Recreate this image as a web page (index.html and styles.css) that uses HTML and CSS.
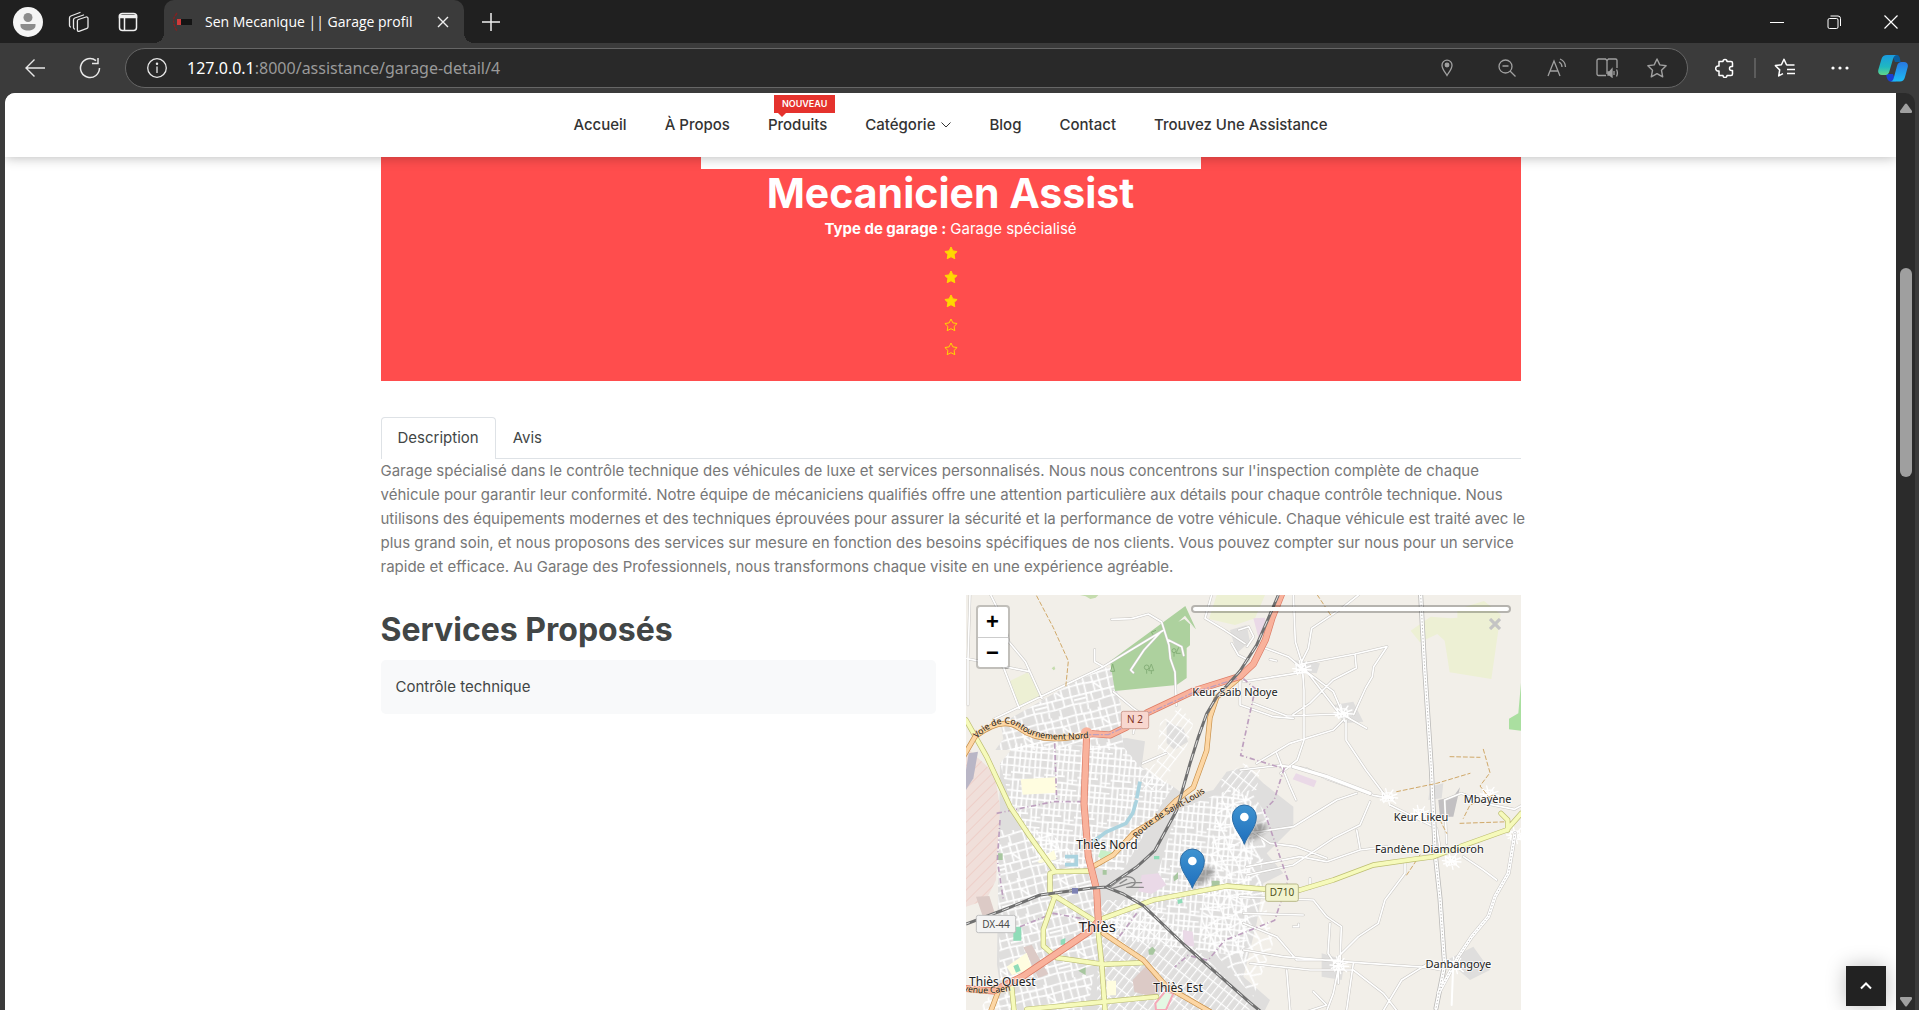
FILE: index.html
```html
<!DOCTYPE html>
<html lang="fr">
<head>
<meta charset="utf-8">
<title>Sen Mecanique || Garage profil</title>
<link rel="stylesheet" href="styles.css">
</head>
<body>
<div class="titlebar">
  <div class="strip-tools">
    <button class="strip-btn" aria-label="Profil"><svg width="30" height="30" viewBox="0 0 30 30"><circle cx="15" cy="15" r="15" fill="#f5f5f5"/><circle cx="15" cy="10.500" r="4.500" fill="#8c8c8c"/><path d="M7.500 17h15v1.500c0 3.500-3.500 5-7.500 5s-7.500-1.500-7.500-5z" fill="#8c8c8c"/></svg></button>
    <button class="strip-btn" aria-label="Espaces"><svg width="22" height="22" viewBox="0 0 22 22" fill="none" stroke="#e8e8e8" stroke-width="1.300" stroke-linejoin="round" stroke-linecap="round"><path d="M11.500 8.500l7.500-2.500a1.500 1.500 0 0 1 2 1.500v8.500a1.500 1.500 0 0 1-1 1.300l-8 3a1.200 1.200 0 0 1-1.600-1.200V10a1.600 1.600 0 0 1 1.100-1.500z"/><path d="M7.500 18a2 2 0 0 1-1-1.500V9a2 2 0 0 1 1.300-2L16.500 4M3.500 16a2 2 0 0 1-1-1.500V7a2 2 0 0 1 1.300-2L13 1.500"/></svg></button>
    <button class="strip-btn" aria-label="Onglets"><svg width="20" height="20" viewBox="0 0 20 20" fill="none" stroke="#f0f0f0" stroke-width="1.500"><rect x="1.500" y="1.500" width="17" height="17" rx="3"/><path d="M1.500 3.500h17v2h-17z" fill="#f0f0f0"/><path d="M6.500 6v12"/></svg></button>
  </div>
  <div class="tab">
    <svg width="20" height="20" viewBox="0 0 20 20"><path d="M4 1C1 5 0 8 .5 10S2 16 4 19" fill="none" stroke="#7d2323" stroke-width="1.500" stroke-dasharray="3 1"/><path d="M4 7h4v6H4z" fill="#d23a3a"/><path d="M8 7h11v6H8z" fill="#141414"/></svg>
    <span class="tab-title">Sen Mecanique || Garage profil</span>
    <button class="tab-close" aria-label="Fermer l'onglet"><svg width="12" height="12" viewBox="0 0 12 12" stroke="#f0f0f0" stroke-width="1.400"><path d="M1 1l10 10M11 1L1 11"/></svg></button>
  </div>
  <button class="new-tab" aria-label="Nouvel onglet"><svg width="18" height="18" viewBox="0 0 18 18" stroke="#f0f0f0" stroke-width="1.500"><path d="M9 0v18M0 9h18"/></svg></button>
  <div class="window-controls">
    <button aria-label="Réduire"><svg width="14" height="14" viewBox="0 0 14 14" stroke="#fff" stroke-width="1"><path d="M0 7.500h14"/></svg></button>
    <button aria-label="Restaurer"><svg width="14" height="14" viewBox="0 0 14 14" fill="none" stroke="#fff" stroke-width="1"><rect x="1" y="3.500" width="10" height="10" rx="1.500"/><path d="M3.500 1h7.500a2.500 2.500 0 0 1 2.500 2.500V11"/></svg></button>
    <button aria-label="Fermer"><svg width="14" height="14" viewBox="0 0 14 14" stroke="#fff" stroke-width="1.200"><path d="M.5.5l13 13M13.500.5l-13 13"/></svg></button>
  </div>
</div>

<div class="toolbar">
  <button class="tool" aria-label="Retour"><svg width="20" height="20" viewBox="0 0 20 20" fill="none" stroke="#e8e8e8" stroke-width="1.400"><path d="M20 10H1M9.500 1.500L1 10l8.500 8.500"/></svg></button>
  <button class="tool reload" aria-label="Actualiser"><svg width="22" height="22" viewBox="0 0 22 22" fill="none" stroke="#e8e8e8" stroke-width="1.500"><path d="M20.500 11A9.500 9.500 0 1 1 17 3.700M19 1v5.500h-6"/></svg></button>
  <div class="address">
    <svg width="20" height="20" viewBox="0 0 20 20" fill="none" stroke="#e8e8e8" stroke-width="1.300"><circle cx="10" cy="10" r="9.300"/><path d="M10 8.500V15"/><circle cx="10" cy="5.800" r=".6" fill="#e8e8e8"/></svg>
    <div class="url" role="textbox" aria-label="Adresse"><span class="host">127.0.0.1</span>:8000/assistance/garage-detail/4</div>
    <button class="pin" aria-label="Position"><svg width="12" height="18" viewBox="0 0 12 18" fill="none" stroke="#a0a0a0" stroke-width="1.300"><path d="M6 16.500C4 13 1 10 1 6.200a5 5 0 0 1 10 0C11 10 8 13 6 16.500z"/><circle cx="6" cy="6" r="1.800" fill="#a0a0a0"/></svg></button>
    <button aria-label="Zoom"><svg width="18" height="18" viewBox="0 0 18 18" fill="none" stroke="#a0a0a0" stroke-width="1.300"><circle cx="7.500" cy="7.500" r="6.500"/><path d="M12 12l5.500 5.500M4.500 7h6"/></svg></button>
    <button aria-label="Lecture à voix haute"><svg width="20" height="20" viewBox="0 0 20 20" fill="none" stroke="#a0a0a0" stroke-width="1.300"><path d="M1 18L7 3l6 15M3 13h8M12 4c2 1 3 3 3 5M13 1c3.500 1.500 5.500 4 5.500 8"/></svg></button>
    <button aria-label="Lecteur immersif"><svg width="22" height="20" viewBox="0 0 22 20" fill="none" stroke="#a0a0a0" stroke-width="1.300"><path d="M10 17.500H2.500A1.500 1.500 0 0 1 1 16V2.500A1.500 1.500 0 0 1 2.500 1h7l1.500 1.500L12.500 1h7A1.500 1.500 0 0 1 21 2.500V10M11 2.500V16"/><path d="M12 14h1.500l2.500-3v8l-2.500-2H12z" fill="#a0a0a0"/><path d="M18 13v4M20.500 11.500c1 2 1 5 0 7"/></svg></button>
    <button aria-label="Favori"><svg width="20" height="20" viewBox="0 0 20 20" fill="none" stroke="#a0a0a0" stroke-width="1.400" stroke-linejoin="round"><path d="M10 1l2.800 5.900 6.300.9-4.600 4.500 1.200 6.500L10 15.700l-5.700 3.100 1.200-6.500L.9 7.800l6.300-.9z"/></svg></button>
  </div>
  <button class="tool puzzle" aria-label="Extensions"><svg width="20" height="20" viewBox="0 0 20 20" fill="none" stroke="#fff" stroke-width="1.500" stroke-linejoin="round"><path d="M4 3.500h4a2 2 0 1 1 4 0h4a1.500 1.500 0 0 1 1.500 1.500v3.500h-1a2 2 0 1 0 0 4h1V16a1.500 1.500 0 0 1-1.500 1.500h-4a2 2 0 1 1-4 0H4V13a2.600 2.600 0 1 1 0-5z"/></svg></button>
  <span class="divider"></span>
  <button class="tool" aria-label="Favoris"><svg width="22" height="20" viewBox="0 0 22 20" fill="none" stroke="#fff" stroke-width="1.500" stroke-linejoin="round"><path d="M20.500 7h-7l-1-.3L10 1.200 7.400 6.700l-6 .9 4.300 4.300-1 6 4.300-2.300M13 11.500h8M13 15.500h8"/></svg></button>
  <button class="tool more" aria-label="Plus"><svg width="18" height="4" viewBox="0 0 18 4" fill="#fff"><circle cx="2" cy="2" r="1.600"/><circle cx="9" cy="2" r="1.600"/><circle cx="16" cy="2" r="1.600"/></svg></button>
  <button class="tool copilot" aria-label="Copilot"><svg width="30" height="27" viewBox="0 0 30 27"><defs><linearGradient id="cp1" x1="0" y1="0" x2="0" y2="1"><stop offset="0" stop-color="#1a9be0"/><stop offset=".6" stop-color="#1fb8c0"/><stop offset="1" stop-color="#62d488"/></linearGradient><linearGradient id="cp2" x1="0" y1="0" x2="0" y2="1"><stop offset="0" stop-color="#2878e0"/><stop offset="1" stop-color="#1dbcf5"/></linearGradient></defs><path d="M14 0h5c2 0 3 2 3.500 7H17z" fill="#0a5c9c"/><path d="M8 19h7l3 7.500h-5c-3 0-4-2-5-7.500z" fill="#1a3fd0"/><path d="M9 0h10c-2 0-3 1-4 4l-3.500 12c-.7 2.500-2 4-4 4H4c-3 0-4.500-2-3.600-5.500L3.500 4C4.300 1.500 6 0 9 0z" fill="url(#cp1)"/><path d="M22 26.500H12c2 0 3-1 3.600-3L19 11c.8-3 2.500-4 4.500-4H26c3 0 4.500 2 3.600 5.500L27 22c-.8 3-2.500 4.500-5 4.500z" fill="url(#cp2)"/></svg></button>
</div>

<div class="frame">
  <div class="viewport">
    <header class="site-header">
      <nav class="menu">
        <a href="#">Accueil</a>
        <a href="#">À Propos</a>
        <a href="#" class="has-badge">Produits<span class="badge">NOUVEAU</span></a>
        <a href="#">Catégorie<svg width="10" height="6" viewBox="0 0 10 6" fill="none" stroke="#333" stroke-width="1"><path d="M.5.5L5 5 9.500.5"/></svg></a>
        <a href="#">Blog</a>
        <a href="#">Contact</a>
        <a href="#">Trouvez Une Assistance</a>
      </nav>
    </header>

    <main class="container">
      <section class="hero">
        <div class="photo"></div>
        <h1>Mecanicien Assist</h1>
        <p><strong>Type de garage :</strong> Garage spécialisé</p>
        <ul class="stars">
          <li><svg viewBox="0 0 14 14"><use href="#star"/></svg></li>
          <li><svg viewBox="0 0 14 14"><use href="#star"/></svg></li>
          <li><svg viewBox="0 0 14 14"><use href="#star"/></svg></li>
          <li class="empty"><svg viewBox="0 0 14 14"><use href="#star"/></svg></li>
          <li class="empty"><svg viewBox="0 0 14 14"><use href="#star"/></svg></li>
        </ul>
        <svg class="defs" width="0" height="0"><path id="star" d="M7 1l1.900 3.900 4.200.6-3.050 3 .75 4.200L7 10.700l-3.800 2 .75-4.200-3.050-3 4.200-.6z"/></svg>
      </section>

      <div class="tabs" role="tablist">
        <button class="active" role="tab" aria-selected="true">Description</button>
        <button role="tab" aria-selected="false">Avis</button>
      </div>
      <p class="description">Garage spécialisé dans le contrôle technique des véhicules de luxe et services personnalisés. Nous nous concentrons sur l'inspection complète de chaque<br>véhicule pour garantir leur conformité. Notre équipe de mécaniciens qualifiés offre une attention particulière aux détails pour chaque contrôle technique. Nous<br>utilisons des équipements modernes et des techniques éprouvées pour assurer la sécurité et la performance de votre véhicule. Chaque véhicule est traité avec le<br>plus grand soin, et nous proposons des services sur mesure en fonction des besoins spécifiques de nos clients. Vous pouvez compter sur nous pour un service<br>rapide et efficace. Au Garage des Professionnels, nous transformons chaque visite en une expérience agréable.</p>

      <div class="columns">
        <section class="services">
          <h2>Services Proposés</h2>
          <ul><li>Contrôle technique</li></ul>
        </section>

        <section class="map" aria-label="Carte">
          <svg class="tiles" viewBox="18 15 1665 1500" preserveAspectRatio="xMidYMin slice">
            <defs>
              <pattern id="gridA" width="120" height="110" patternUnits="userSpaceOnUse" patternTransform="rotate(-14)"><path d="M0 8l60 3 60-3M0 32l40-2 44 4 36-2M0 62h50l70 0M0 86l70 4 50-4M8 0l-3 55 3 55M30 8l2 54M26 86v24M26 0v8M52 10v52l-4 48M52 0v10M78 0l2 60M80 34l24 28M98 8l2 54 0 28M66 62l2 28M84 90v20M84 0v8M12 74h36" stroke="#fff" stroke-width="5" fill="none"/></pattern>
              <pattern id="gridB" width="100" height="120" patternUnits="userSpaceOnUse" patternTransform="rotate(5)"><path d="M0 6h100M0 30l40 2 60-2M0 50h62M0 72l50-3 50 3M30 90h70M0 104l60 2 40-2M8 0v120M24 6v44M24 72v48M24 0v6M40 0l-2 50 2 70M54 6v44M56 70v50M56 0v6M70 0l2 72-2 48M86 6v66M86 90v30M86 0v6M72 60h28" stroke="#fff" stroke-width="5" fill="none"/></pattern>
              <pattern id="gridC" width="20" height="38" patternUnits="userSpaceOnUse" patternTransform="rotate(38)"><path d="M0 1h20M1 0v38" stroke="#fff" stroke-width="5" fill="none"/></pattern>
              <pattern id="gridD" width="110" height="100" patternUnits="userSpaceOnUse" patternTransform="rotate(66)"><path d="M0 6l50 8 60-8M0 40l60-6 50 6M0 74l40 4 70-4M8 0l8 50-8 50M40 10l6 64-6 26M40 0v10M76 0l-10 40 20 34-10 26M16 50l30 24M66 40l44-34M100 40l-8 34" stroke="#fff" stroke-width="5" fill="none"/></pattern>
              <pattern id="hatch" width="24" height="24" patternUnits="userSpaceOnUse" patternTransform="rotate(45)"><path d="M0 0v24" stroke="#ecc0b8" stroke-width="3"/></pattern>
              <path id="northRoad" d="M50 446C90 405 140 385 180 416S280 455 385 444L440 436"/>
              <path id="louisRoad" d="M530 747C570 700 610 680 700 630S742 560 752 530"/>
              <path id="caen" d="M-6 1198Q70 1222 180 1196"/>
              <path id="lanes" d="M30 15l-6 190 0 140M18 205l190 40M92 15l40 80 14 60 50 60 50 110M118 200l60 155M100 388l330-158 178-108M430 230l-26-15v-36M455 88l60-2 50-14 40 24 22 70 4 40 14 40 4 100M600 128l-48 52-40 60 8 8M625 150l40 20 6 26M460 305l60 50 40 28M520 430l8-40M755 15l-20 70 60 36 60 40M836 120l30-10 15 30-20 30M815 160l20 35 30 15M548 520l70-30M1000 15l6 140 20 65 6 80 0 150 -20 60-50 40M1195 15l-50 40-90 60-10 60-20 40M905 170l80 30 60 50 100 130M1025 222l160-30 96-22-40 60-4 30-20 34-36 80M1185 192l4 42-70 36-70 70-50 34M840 265l0 80 100 35 60 5M850 275l190-30 80 60 30 70 70 40M880 340l100 38 160-6M930 208l20 5M890 520l100-60 130-40 30-30M1158 390l0 60 60 90 60 80M950 490l40 100 18 40M840 540l120-14 80 10 60 30 140 50 60 10M1460 760l-6-130 50-20 70 30 90 18 18-10M1230 635l-30 70-80 40-120 80-140 30M860 730l140-20 130-80 60-20M1190 720l10 55M860 830l160-30 80 15 100-35 80-10M870 720l60 40 80 10 90 35 M1335 810l0 40-60 80-20 70-60 40-60 60v80M840 920l220 10 40 50 44 30-4 110M850 970l180 5M1050 865v30M850 1000l100 40 60 70 90 0 30 0M850 1080l120 20 180 15 260 18 40 8M1140 1110l-20 100-30 80M1180 1120l-20 140M870 1120l180 20 130 0 90 70 70 90M980 1140l10 120M1060 1205l40 40-60 20M1405 1120l-80 50-60 100M1510 800l60 40 40 30M1440 775l-10-60-60-30-80-40M1000 1010h16v-8M1110 1000l-6 90 20 30"/>
              <path id="village" d="M-24 10L26-8M-20-14L22 20M-8-24L4 26M14-20L-14 18M-28 0l56 4M-16 14l30-2-4-24-28 2z" fill="none" stroke="#fff" stroke-width="4"/>
              <path id="highway" d="M1382 15l12 220 20 300 12 260 14 130 14 200-26 130"/>
              <path id="yellow" d="M18 390l62 110 70 150 60 90 75 105 105-2M285 845l-15 5 0 60 15 8-35 100 0 50 40 35 140 20 120-5M285 918l120 75M430 985l150-55 220-42 120 10 100 2 100-30 120-45 120-17 60-8 80-30 140-50 44-50M1643 720v-30l-20-20M415 1030l10 90 10 140M155 1190l8 80M200 1258l390-38"/>
              <path id="orange" d="M10 500l35-60C90 405 140 385 180 416S280 455 370 436M840 262l-70 60-20 60-10 100-40 110-50 38-50 50-80 50-60 65-60 34M430 1030l120 80 70 80 130 75M120 1190l-30 80"/>
              <path id="trunk" d="M10 1195l90 8 90-45 200-135 25-30-5-93-25-100-13-160 8-210 70 5 50-24 60-42 140-66 140-44 40-37 36-72 20-66 34-85"/>
              <path id="rail" d="M955 15l-30 70-35 80-50 78-70 78-30 50-25 70-25 80-40 140-65 120-55 50-90 60-50 4-150 20-110 45-112 42M440 892l50 20 60 35 120 115 200 176 80 66"/>
            </defs>
            <path d="M18 15h1665v1500H18z" fill="#f2efe9"/>
            <!-- fields -->
            <path fill="#edf0d4" d="M145 275l58-28 44 74-68 34zM770 15h100l45 0-30 70-60 20-78-18zM1352 122l60-42 60 5 20-2v-25l80-25 50 40-28 194-125-20-15-95-22-20-52 25z"/>
            <path d="M360 15h55l-8 8-16 4-14-8zM275 235l8-6 3 8-5 4z" fill="#c5dcae"/>
            <path d="M1683 278l-8 92-28 16v32l36 4z" fill="#aadfa0"/>
            <path d="M1480 620l-45 10 5 50h40l20-88z" fill="#c2c0c2"/>
            <!-- built-up areas -->
            <g fill="#dfdedd">
              <path d="M122 402l300-172 30 4 30 106 8 130-20 10-364 0 24-34z"/>
              <path d="M120 520l50-60 330-16 55 10-10 76 40 30 55 30 40 30 80-20 40-55 60-15 50 50 90 70 0 60-80 80 50 60-60 30-20 120-40 160 80 70-40 80-30 140-40 245H60l0-300 60-40-10-180z"/>
              <path d="M810 120l50-15 10 50-40 35zM1000 210l80 10-10 30-60-5zM1120 345l60-10 30 60-60 5zM1410 590l40-10-5 45-40 5zM1085 1090l70 20-10 60-60-10zM1460 1110l80-40 50 70-60 30zM620 395l50 20 14 40-40 24-24-20z"/>
            </g>
            <path d="M122 402l300-172 30 4 30 106 8 130-20 10-364 0 24-34z" fill="url(#gridA)"/>
            <path d="M120 520l50-60 320 10 50 60 100 60-40 60-110 190-110 0-150-30-80-180z" fill="url(#gridB)"/>
            <path d="M110 720h150l140 120 30 150-40 230-60 295H60v-260l60-80z" fill="url(#gridA)"/>
            <path d="M410 1000l180-140 60-200 180-70 60 60-20 290-20 160-430-60z" fill="url(#gridB)"/>
            <path d="M420 930l150 0 300 310-20 275H400z" fill="url(#gridC)"/>
            <path d="M770 640l100-40 60 90-30 170 40 200-60 160-160-180z" fill="url(#gridD)"/>
            <path d="M600 400l60-50 40 50-20 70-40 50-30 80-60 0-10-60 50-20z" fill="url(#gridC)"/>
            <path d="M780 570l70-50 50 20-10 60-100 20z" fill="url(#gridC)"/>
            <!-- industry, gardens and public grounds -->
            <path d="M18 470l85 80 17 100-12 220-30 60-60 20z" fill="#f0dfda"/><path d="M18 470l85 80 17 100-12 220-30 60-60 20z" fill="url(#hatch)"/>
            <path d="M18 1010l80 30 20 130-100 20z" fill="#f2efe9"/>
            <path d="M26 490l28-5-14 80-22 35v-60z" fill="#b9b6c6"/>
            <path d="M48 920l40-2 16 50-36 10zM190 1072l25-8 50 88-30 12zM518 1170l40-42 55 58-30 36-60-16z" fill="#dccac6"/>
            <path d="M545 855l50-5 24 34-44 28-40-8zM668 1020l30 5 5 45-30-5zM880 85l35-2 5 40-25 18zM1008 550l62 22-8 20-64-24z" fill="#ead9e7"/>
            <g fill="#fffde0"><path d="M182 568l106-6 2 46-102 6zM232 815l50-35 8 28-50 12zM140 1130l60-42 16 48-60 20zM440 1172h28v44h-28z"/></g>
            <g fill="#8fdcb8"><path d="M160 1010h24v42h-24zM160 1128l14-6 8 20-14 6zM302 1050l14-6v20h-14zM582 798h16v10h-16zM652 930l14-4 2 12-14 4z"/></g>
            <g fill="#a8c7a0"><path d="M565 1080l12-10 10 10-8 14h-12zM355 1142l22-10v24zM114 790h14v20h-14zM428 840h12v14h-12zM755 872h24v22h-24zM640 860l14-14v20l-12 8z"/></g>
            <path d="M586 1240l30-36 24 6-22 50h-30z" fill="#e4f8e4" stroke="#f5a8b8" stroke-width="6"/>
            <path d="M450 214l226-166 32 70-18-16 0 64-10 8 0 90-30 21-185 18z" fill="#add19e"/>
            <path d="M655 95l20-18 33 42-35-32z" fill="#f2efe9"/>
            <g fill="none" stroke="#86b079" stroke-width="3"><circle cx="560" cy="232" r="7"/><path d="M560 239v12M574 222l-8 20h15zM574 242v10"/><circle cx="642" cy="182" r="6"/><path d="M642 188v12M656 172l-8 18h14M458 222l-6 22h12zM580 135l-6-8 14-6"/></g>
            <path d="M530 630l-12 40-20 30-60 26-40 30M315 800h34v24h-34M540 575l-10 50" fill="none" stroke="#aad3df" stroke-width="11"/>
            <path d="M422 780l50 10-40 20-18-10z" fill="#c8efc8"/>
            <g fill="none" stroke-linejoin="round" stroke-linecap="round">
              <!-- country tracks and local roads -->
              <use href="#lanes" stroke="#c9c7c4" stroke-width="8"/>
              <use href="#lanes" stroke="#fff" stroke-width="5"/>
              <use href="#village" x="1026" y="236"/><use href="#village" x="1150" y="368"/><use href="#village" x="1285" y="620"/><use href="#village" x="1380" y="670"/><use href="#village" x="1138" y="1125"/><use href="#village" x="1488" y="1125"/><use href="#village" x="1668" y="735"/><use href="#village" x="1588" y="612"/><use href="#village" x="1475" y="812"/>
              <use href="#highway" stroke="#bdbcba" stroke-width="15"/>
              <path d="M1000 530l100 30 130 50M1665 730l-20 120-40 70-20 60-50 60-40 60-60 110" stroke="#c9c7c4" stroke-width="13"/>
              <g stroke="#fff" stroke-width="10"><use href="#highway"/><path d="M1000 530l100 30 130 50M1665 730l-20 120-40 70-20 60-50 60-40 60-60 110"/></g>
              <path d="M1382 15l12 220 20 300 12 260 14 130 14 200-26 130M1665 730l-20 120-40 70-20 60-50 60-40 60-60 110" stroke="#c4c3c1" stroke-width="3" stroke-dasharray="2 8"/>
              <path d="M1475 1245l5-130" stroke="#fff" stroke-width="6"/>
              <path d="M230 18l50 95 45 100-8 80M1072 15l40 60M1470 500l90 2M1570 478l20 70-30 40 40 50M1310 605l120-25 100-30M1340 855l40-60M1500 700l150-5M1600 615l-70 30-20 40M1440 690l20 40" stroke="#d0a868" stroke-width="3" stroke-dasharray="12 8"/>
              <path d="M284 460l6 170M120 690l-8 120 18 120M110 670l170-35 90 0M850 266l36 30-44 200 130 40-30 95-30 30 72 210-40 120-150 60-50 60-60-15-40 35M180 1010l100-40 110 20M430 1100l8 160M530 970l-60 80" stroke="#bd9fbe" stroke-width="5" stroke-dasharray="16 8 3 8" stroke-linecap="butt"/>
              <!-- main roads -->
              <use href="#yellow" stroke="#bdbe72" stroke-width="16"/><use href="#yellow" stroke="#f6fabb" stroke-width="12"/>
              <use href="#orange" stroke="#c8904a" stroke-width="16"/><use href="#orange" stroke="#fcd6a4" stroke-width="12"/>
              <use href="#trunk" stroke="#dc7c66" stroke-width="21"/><use href="#trunk" stroke="#f9b29c" stroke-width="17"/>
              <circle cx="380" cy="430" r="18" fill="#f9b29c"/>
              <path d="M365 434h80l60-28 55-34 140-64 130-42" stroke="#bd9fbe" stroke-width="4" stroke-dasharray="16 8 3 8"/>
              <!-- railway -->
              <use href="#rail" stroke="#707070" stroke-width="9" stroke-linecap="butt"/>
              <use href="#rail" stroke="#e4e4e4" stroke-width="3" stroke-linecap="butt" stroke-dasharray="22 20"/>
              <path stroke="#8c8c8c" stroke-width="4" d="M450 892l40-30a24 16 0 1 1 10 30h50M455 896l60-18h30M480 880l20-12"/>
              <path d="M336 894h18v17h-18z" fill="#7e82b4"/>
            </g>
            <!-- road shields -->
            <g stroke-width="3">
              <rect x="484" y="364" width="82" height="52" rx="6" fill="#f8d7cf" stroke="#cf9f93"/>
              <rect x="917" y="882" width="98" height="52" rx="6" fill="#f2f4cf" stroke="#b8b989"/>
              <rect x="49" y="976" width="118" height="52" rx="6" fill="#f4f4f4" stroke="#c0c0c0"/>
            </g>
            <g class="shields"><text x="525" y="400" class="red">N 2</text><text x="966" y="918" class="olive">D710</text><text x="108" y="1013">DX-44</text></g>
            <g class="places">
              <text x="825" y="318">Keur Saib Ndoye</text><text class="district" x="441" y="777">Thiès Nord</text><text class="town" x="412" y="1026">Thiès</text>
              <text class="district" x="127" y="1187">Thiès Ouest</text><text class="district" x="654" y="1205">Thiès Est</text><text x="1583" y="639">Mbayène</text><text x="1383" y="692">Keur Likeu</text>
              <text x="1408" y="790">Fandène Diamdioroh</text><text x="1495" y="1134">Danbangoye</text>
            </g>
            <g class="streets"><text><textPath href="#northRoad">Voie de Contournement Nord</textPath></text><text><textPath href="#louisRoad">Route de Saint-Louis</textPath></text><text><textPath href="#caen">Avenue Caen</textPath></text></g>
            <!-- markers -->
            <defs>
              <linearGradient id="pinFill" x1="0" y1="0" x2="0" y2="1"><stop offset="0" stop-color="#3f93d0"/><stop offset="1" stop-color="#1f6fbd"/></linearGradient>
              <filter id="soft" x="-30%" y="-30%" width="160%" height="160%"><feGaussianBlur stdDeviation="6"/></filter>
              <g id="marker"><path d="M0 0L18-46Q36-74 58-62T42-22z" fill="#000" opacity=".3" filter="url(#soft)"/><path d="M0 0C-8-26-36-50-36-82a36 36 0 0 1 72 0C36-50 8-26 0 0z" fill="url(#pinFill)" stroke="#2e6ea6" stroke-width="3"/><circle cy="-82" r="13" fill="#fff"/></g>
            </defs>
            <use href="#marker" x="853" y="763"/><use href="#marker" x="697" y="895"/>
          </svg>
          <div class="zoom-control"><button aria-label="Zoom avant">+</button><button aria-label="Zoom arrière">−</button></div>
          <div class="route-panel"></div>
          <button class="route-close" aria-label="Fermer l'itinéraire"><svg width="12" height="12" viewBox="0 0 12 12" stroke="#c4c4c4" stroke-width="3.200"><path d="M1 1l10 10M11 1L1 11"/></svg></button>
        </section>
      </div>
    </main>
    <button class="to-top" aria-label="Haut de page"><svg width="12" height="8" viewBox="0 0 12 8" fill="none" stroke="#fff" stroke-width="2"><path d="M1 6.500l5-5 5 5"/></svg></button>
  </div>
  <div class="scrollbar">
    <svg width="14" height="10" viewBox="0 0 14 10"><path d="M6 1q1-1 2 0l5 7q.5 2-1 2H2q-1.500 0-1-2z" fill="#a0a0a0"/></svg>
    <div class="track"><span class="before"></span><span class="thumb"></span><span class="after"></span></div>
    <svg width="14" height="10" viewBox="0 0 14 10"><path d="M6 9q1 1 2 0l5-7q.5-2-1-2H2Q.5 0 1 2z" fill="#a0a0a0"/></svg>
  </div>
</div>
</body>
</html>
```

FILE: styles.css
```css
* { box-sizing: border-box; }
body {
  margin: 0;
  height: 100vh;
  display: flex;
  flex-direction: column;
  overflow: hidden;
  background: #3b3b3b;
  color: #424646;
  font: 15px/24px Inter, "Open Sans", sans-serif;
}
button { border: 0; padding: 0; background: none; color: inherit; font: inherit; display: flex; align-items: center; justify-content: center; }
svg { display: block; flex: none; }
h1, h2, p, ul { margin: 0; padding: 0; list-style: none; }
a { color: inherit; text-decoration: none; }

/* browser title bar */
.titlebar { flex: none; height: 43px; display: flex; background: #202020; }
.strip-tools { display: flex; align-items: center; gap: 20px; padding: 0 21px 0 13px; }
.strip-btn { width: 30px; height: 30px; }
.tab {
  position: relative;
  width: 300px;
  padding: 0 14px 0 9px;
  display: flex;
  align-items: center;
  background: #3b3b3b;
  border-radius: 10px 10px 0 0;
  color: #fff;
  font: 14px/20px "Open Sans", sans-serif;
}
.tab::before, .tab::after { content: ""; position: absolute; bottom: 0; width: 10px; height: 10px; }
.tab::before { left: -10px; background: radial-gradient(circle at 0 0, #202020 10px, #3b3b3b 10px); }
.tab::after { right: -10px; background: radial-gradient(circle at 100% 0, #202020 10px, #3b3b3b 10px); }
.tab-title { flex: 1; padding-left: 12px; white-space: nowrap; }
.tab-close { width: 14px; height: 20px; }
.new-tab { width: 54px; }
.window-controls { margin-left: auto; display: flex; }
.window-controls button { width: 57px; }

/* browser toolbar */
.toolbar { flex: none; height: 50px; display: flex; align-items: center; padding: 0 6px 0 15px; }
.tool { flex: none; width: 40px; height: 40px; }
.reload { margin: 0 15px; }
.address {
  flex: 1;
  height: 40px;
  padding: 0 14px 0 21px;
  display: flex;
  align-items: center;
  gap: 18px;
  border: 1px solid #666;
  border-radius: 20px;
  background: #292929;
}
.address button { width: 32px; height: 32px; }
.address .pin { margin-right: 10px; }
.url { flex: 1; padding-left: 2px; color: #9a9a9a; font: 16px/24px "Noto Sans", sans-serif; white-space: nowrap; }
.host { color: #fff; }
.puzzle { margin: 0 9px 0 17px; }
.divider { width: 2px; height: 20px; margin-right: 9px; background: #5c5c5c; }
.more { margin: 0 13px 0 15px; }

/* page frame */
.frame { flex: 1; min-height: 0; display: flex; padding: 0 4px 0 5px; }
.viewport { flex: 1; position: relative; overflow: hidden; background: #fff; border-radius: 10px 0 0 0; }
.scrollbar { width: 19px; padding: 10px 0 3px; display: flex; flex-direction: column; align-items: center; background: #2b2b2b; border-radius: 0 10px 0 0; }
.track { flex: 1; display: flex; flex-direction: column; }
.before { flex: 155; }
.thumb { flex: 209; width: 12px; border-radius: 6px; background: #9f9f9f; }
.after { flex: 521; }

/* site header */
.site-header { position: relative; z-index: 2; height: 64px; background: #fff; box-shadow: 0 0 12px rgba(0, 0, 0, .3); }
.menu { height: 64px; display: flex; justify-content: center; align-items: center; gap: 38px; color: #333; font-weight: 500; }
.menu a { display: flex; align-items: center; gap: 6px; white-space: nowrap; }
.has-badge { position: relative; }
.badge {
  position: absolute;
  top: -18px;
  left: 6px;
  height: 18px;
  padding: 0 8px;
  background: #e5322d;
  color: #fff;
  font-size: 9px;
  font-weight: 600;
  line-height: 18px;
}
.badge::after { content: ""; position: absolute; left: 4px; top: 18px; border: 4px solid transparent; border-top-color: #e5322d; border-bottom: 0; }

/* garage profile */
.container { max-width: 1140px; margin: 0 auto; }
.hero { padding-bottom: 20px; background: #ff4d4d; color: #fff; text-align: center; }
.photo { width: 500px; max-width: 100%; height: 12px; margin: 0 auto; background: #fff; }
.hero h1 { font-size: 41px; font-weight: 700; line-height: 48px; }
.stars li { height: 24px; display: flex; align-items: center; justify-content: center; }
.stars svg { width: 14px; height: 14px; fill: #ffd700; stroke: #ffd700; stroke-width: 1; }
.stars .empty svg { fill: none; }
.defs { position: absolute; }

.tabs { display: flex; margin-top: 36px; border-bottom: 1px solid #dee2e6; }
.tabs button { height: 41px; padding: 0 16px; border: 1px solid transparent; border-bottom: 0; border-radius: 4px 4px 0 0; }
.tabs .active { margin-bottom: -1px; height: 42px; padding-bottom: 1px; border-color: #dee2e6; background: #fff; }
.description { color: #777; white-space: nowrap; }

.columns { display: grid; grid-template-columns: 1fr 1fr; gap: 30px; margin-top: 16px; }
.services h2 { margin: 16px 0 11px; font-size: 32px; font-weight: 700; line-height: 38px; }
.services li { padding: 15px; border-radius: 5px; background: #f8f9fa; }

/* map */
.map { position: relative; height: 500px; overflow: hidden; background: #f2efe9; }
.tiles { width: 100%; height: 100%; font-family: "Noto Sans", sans-serif; }
.places text { font-size: 33px; text-anchor: middle; fill: #222; stroke: rgba(255, 255, 255, .7); stroke-width: 6px; paint-order: stroke; }
.places .district { font-size: 36px; }
.places .town { font-size: 45px; }
.shields text { font-size: 30px; text-anchor: middle; fill: #4a4a4a; }
.shields .red { fill: #813527; }
.shields .olive { fill: #50531b; }
.streets text { font-size: 26px; fill: #222; stroke: rgba(252, 214, 164, .8); stroke-width: 3px; paint-order: stroke; }
.zoom-control { position: absolute; left: 10px; top: 10px; border: 2px solid rgba(0, 0, 0, .2); border-radius: 4px; background: #fff; background-clip: padding-box; color: #000; }
.zoom-control button { width: 30px; height: 30px; font: bold 22px/24px "Liberation Sans", sans-serif; }
.zoom-control button + button { border-top: 1px solid #ccc; }
.route-panel { position: absolute; right: 10px; top: 10px; width: 320px; height: 8px; border: 2px solid rgba(0, 0, 0, .25); border-radius: 5px; background: #fff; background-clip: padding-box; }
.route-close { position: absolute; right: 20px; top: 23px; }

.to-top { position: absolute; z-index: 3; right: 10px; bottom: 4px; width: 40px; height: 40px; background: #222; box-shadow: 0 0 20px rgba(0, 0, 0, .25); }
```
